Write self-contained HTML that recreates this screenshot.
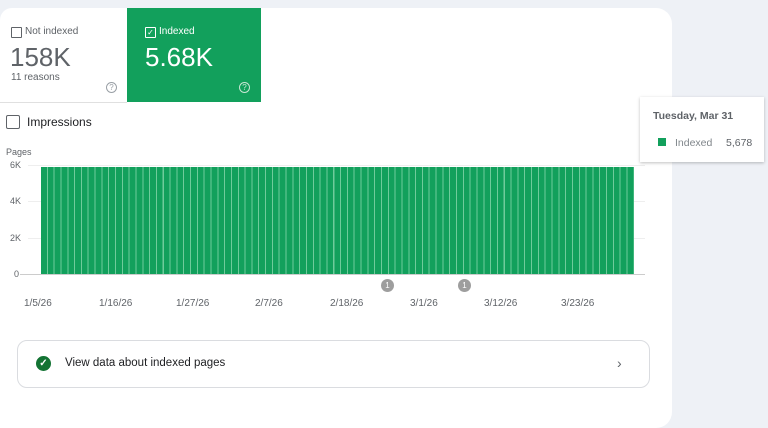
<!DOCTYPE html>
<html><head><style>
body{margin:0;width:768px;height:410px;background:#eef1f6;font-family:"Liberation Sans",sans-serif;position:relative;overflow:hidden}
.card{position:absolute;left:0;top:8px;width:672px;height:420px;background:#fff;border-radius:12px 16px 16px 0}
.abs{position:absolute}
.cb{position:absolute;width:9px;height:9px;border:1px solid #5f6368;border-radius:1px}
.q{position:absolute;width:9px;height:9px;border:1px solid;border-radius:50%;font-size:8px;line-height:9px;text-align:center}
.yl{position:absolute;left:10px;font-size:9px;color:#5f6368}
.gl{position:absolute;left:28px;width:617px;height:1px;background:#eee}
.xl{position:absolute;top:298px;font-size:10px;color:#5f6368}
.ann{position:absolute;top:279px;width:13px;height:13px;border-radius:50%;background:#9e9e9e;color:#fff;font-size:8px;line-height:13px;text-align:center}
</style></head><body>
<div class="card"></div>
<div class="abs" style="left:0;top:8px;width:127px;height:94px;border-bottom:1px solid #e0e0e0"></div>
<div class="cb" style="left:11px;top:27px"></div>
<div class="abs" style="left:25px;top:26px;font-size:10px;color:#5f6368">Not indexed</div>
<div class="abs" style="left:10px;top:42px;font-size:26px;color:#5f6368">158K</div>
<div class="abs" style="left:11px;top:72px;font-size:10px;color:#5f6368">11 reasons</div>
<div class="q" style="left:106px;top:82px;color:#9aa0a6">?</div>
<div class="abs" style="left:127px;top:8px;width:134px;height:94px;background:#12a05c"></div>
<div class="cb" style="left:145px;top:27px;border-color:#fff;color:#fff;font-size:8px;line-height:9px;text-align:center">✓</div>
<div class="abs" style="left:159px;top:26px;font-size:10px;color:#fff">Indexed</div>
<div class="abs" style="left:145px;top:42px;font-size:26px;color:#fff">5.68K</div>
<div class="q" style="left:239px;top:82px;color:#c8e6d4">?</div>
<div class="abs" style="left:6px;top:115px;width:12px;height:12px;border:1.5px solid #5f6368;border-radius:2px"></div>
<div class="abs" style="left:27px;top:115px;font-size:12px;color:#202124">Impressions</div>
<div class="yl" style="left:6px;top:147px">Pages</div>
<div class="yl" style="top:160px">6K</div><div class="gl" style="top:165px"></div>
<div class="yl" style="top:196px">4K</div><div class="gl" style="top:201px"></div>
<div class="yl" style="top:233px">2K</div><div class="gl" style="top:238px"></div>
<div class="yl" style="left:14px;top:269px">0</div><div class="abs" style="left:20px;top:274px;width:625px;height:1px;background:#ccc"></div>
<div class="abs" style="left:41px;top:167px;width:593px;height:107px;background:repeating-linear-gradient(90deg,#12a05c 0,#12a05c 5.8px,#6fcb9b 5.8px,#6fcb9b 6.82px)"></div>
<div class="ann" style="left:381px">1</div><div class="ann" style="left:458px">1</div>
<div class="xl" style="left:24px">1/5/26</div>
<div class="xl" style="left:99px">1/16/26</div>
<div class="xl" style="left:176px">1/27/26</div>
<div class="xl" style="left:255px">2/7/26</div>
<div class="xl" style="left:330px">2/18/26</div>
<div class="xl" style="left:410px">3/1/26</div>
<div class="xl" style="left:484px">3/12/26</div>
<div class="xl" style="left:561px">3/23/26</div>
<div class="abs" style="left:640px;top:97px;width:124px;height:65px;background:#fff;box-shadow:0 1px 3px rgba(0,0,0,.25)"></div>
<div class="abs" style="left:653px;top:110px;font-size:10.5px;font-weight:bold;color:#5f6368">Tuesday, Mar 31</div>
<div class="abs" style="left:658px;top:138px;width:8px;height:8px;background:#12a05c"></div>
<div class="abs" style="left:675px;top:137px;font-size:10.5px;color:#80868b">Indexed</div>
<div class="abs" style="left:726px;top:137px;font-size:10.5px;color:#5f6368">5,678</div>
<div class="abs" style="left:17px;top:340px;width:631px;height:46px;border:1px solid #dadce0;border-radius:10px"></div>
<div class="abs" style="left:36px;top:356px;width:15px;height:15px;border-radius:50%;background:#137333;color:#fff;font-size:10px;line-height:15px;text-align:center;font-weight:bold">✓</div>
<div class="abs" style="left:65px;top:357px;font-size:11.5px;color:#202124">View data about indexed pages</div>
<div class="abs" style="left:617px;top:355px;font-size:14px;color:#5f6368">›</div>
</body></html>
